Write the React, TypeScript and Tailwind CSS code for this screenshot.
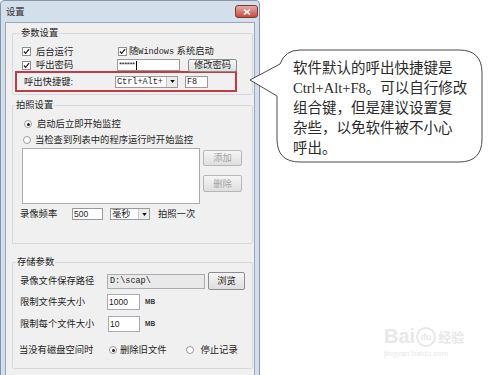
import React from "react";

function Check() {
  return (
    <span className="w-[9px] h-[9px] border border-[#8e8f8f] bg-white flex items-center justify-center shrink-0">
      <svg viewBox="0 0 8 8" className="w-[7px] h-[7px]">
        <path d="M1 4 L3 6.2 L7 1.2" stroke="#1a1a1a" strokeWidth="1.3" fill="none" />
      </svg>
    </span>
  );
}

function Radio({ on }: { on?: boolean }) {
  return (
    <span className="w-[8px] h-[8px] rounded-full border border-[#9a9a9a] bg-white flex items-center justify-center shrink-0">
      {on ? <span className="w-[3px] h-[3px] rounded-full bg-[#222]" /> : null}
    </span>
  );
}

function Btn({ children, w, h, disabled }: { children: React.ReactNode; w: string; h: string; disabled?: boolean }) {
  return (
    <div
      className={`${w} ${h} shrink-0 flex items-center justify-center border rounded-[2px] bg-linear-to-b from-[#f6f6f6] to-[#dedede] ${
        disabled ? "border-[#b5b8bb] text-[#a3a3a3]" : "border-[#8d8d8d] text-[#1e1e1e]"
      }`}
    >
      {children}
    </div>
  );
}

function Select({ w, children }: { w: string; children: React.ReactNode }) {
  return (
    <div className={`${w} h-[12px] shrink-0 flex border border-[#9b9b9b] bg-white`}>
      <div className="flex-1 flex items-center pl-[1px] overflow-hidden">{children}</div>
      <div className="w-[11px] h-full flex items-center justify-center bg-[#ececec] border-l border-[#c8c8c8]">
        <svg viewBox="0 0 6 4" className="w-[5px] h-[3px]">
          <path d="M0 0 H6 L3 4 Z" fill="#111" />
        </svg>
      </div>
    </div>
  );
}

export default function App() {
  const mono = "font-['Liberation_Mono','Noto_Sans_CJK_SC',monospace]";
  return (
    <div className="w-[500px] h-[375px] bg-white relative overflow-hidden flex font-['Liberation_Sans','Noto_Sans_CJK_SC',sans-serif] text-[9.3px] leading-[12px] text-[#1e1e1e]">
      {/* Window */}
      <div className="w-[260px] h-[400px] shrink-0 border border-[#8796aa] bg-[#d4dfec] rounded-t-[4px] flex flex-col">
        <div className="h-[21px] flex justify-between items-start">
          <span className="pl-[5px] pt-[5px] text-[#2a2a2a]">设置</span>
          <div className="mt-[4px] mr-[1px] w-[23px] h-[13px] rounded-[3px] border border-[#7b3a35] bg-linear-to-b from-[#e9aba1] to-[#c24a3e] flex items-center justify-center">
            <svg viewBox="0 0 8 6" className="w-[8px] h-[6px]">
              <path d="M1 0.5 L7 5.5 M7 0.5 L1 5.5" stroke="#fff" strokeWidth="1.6" />
            </svg>
          </div>
        </div>
        <div className="mx-[4px] flex-1 bg-[#f0f0f0] border border-[#98a7b9] flex flex-col">
          {/* Group 1 */}
          <fieldset className="mt-[4px] ml-[6px] w-[241px] border border-[#d3d9de] rounded-[2px] pb-[2px]">
            <legend className="ml-[7px] px-[1px] leading-[12px]">参数设置</legend>
            <div className="mt-[5px] h-[15px] flex items-center pl-[9px]">
              <div className="w-[96px] flex items-center">
                <Check />
                <span className="ml-[5px]">后台运行</span>
              </div>
              <Check />
              <span className="ml-[2px]">
                随<span className={`${mono} text-[8.5px]`}>Windows</span> 系统启动
              </span>
            </div>
            <div className="h-[12px] flex items-center pl-[9px]">
              <div className="w-[95px] flex items-center">
                <Check />
                <span className="ml-[5px]">呼出密码</span>
              </div>
              <div className="w-[63px] h-[12px] border border-[#9b9b9b] bg-white flex items-center pl-[1px] text-[8px] leading-[8px]">
                <span className="tracking-[-0.5px]">******</span>
                <span className="ml-[1px] w-[1px] h-[9px] bg-black" />
              </div>
              <div className="ml-[8px]">
                <Btn w="w-[49px]" h="h-[13px]">修改密码</Btn>
              </div>
            </div>
            <div className="ml-[2px] w-[222px] h-[21px] border-2 border-[#c23b43] flex items-center pl-[7px]">
              <span className="w-[91px]">呼出快捷键:</span>
              <Select w="w-[63px]">
                <span className={`${mono} text-[8.5px] leading-[10px]`}>Ctrl+Alt+</span>
              </Select>
              <div className={`ml-[7px] w-[23px] h-[12px] border border-[#9b9b9b] bg-white flex items-center pl-[1px] ${mono} text-[8.5px]`}>
                F8
              </div>
            </div>
          </fieldset>

          {/* Group 2 */}
          <fieldset className="mt-[4px] ml-[6px] w-[241px] border border-[#d3d9de] rounded-[2px] pb-[22px]">
            <legend className="ml-[2px] px-[1px] leading-[12px]">拍照设置</legend>
            <div className="mt-[5px] h-[16px] flex items-center pl-[11px]">
              <Radio on />
              <span className="ml-[5px]">启动后立即开始监控</span>
            </div>
            <div className="h-[16px] flex items-center pl-[10px]">
              <Radio />
              <span className="ml-[4px]">当检查到列表中的程序运行时开始监控</span>
            </div>
            <div className="flex">
              <div className="ml-[9px] w-[178px] h-[56px] border border-[#a9acb2] bg-white" />
              <div className="ml-[3px] pt-[2px] flex flex-col">
                <Btn w="w-[39px]" h="h-[16px]" disabled>添加</Btn>
                <div className="mt-[9px]">
                  <Btn w="w-[39px]" h="h-[17px]" disabled>删除</Btn>
                </div>
              </div>
            </div>
            <div className="mt-[3px] h-[14px] flex items-center pl-[7px]">
              <span className="w-[52px]">录像频率</span>
              <div className="w-[31px] h-[12px] border border-[#9b9b9b] bg-white flex items-center pl-[1px] text-[8.5px]">500</div>
              <div className="ml-[7px]">
                <Select w="w-[40px]">
                  <span>毫秒</span>
                </Select>
              </div>
              <span className="ml-[8px]">拍照一次</span>
            </div>
          </fieldset>

          {/* Group 3 */}
          <fieldset className="mt-[12px] ml-[6px] w-[241px] border border-[#d3d9de] rounded-[2px] pb-[10px]">
            <legend className="ml-[3px] px-[1px] leading-[12px]">存储参数</legend>
            <div className="mt-[4px] h-[18px] flex items-center pl-[7px]">
              <span className="w-[87px]">录像文件保存路径</span>
              <div className={`w-[98px] h-[15px] border border-[#a9acb2] bg-[#e9e9e9] flex items-center pl-[2px] ${mono} text-[8.5px]`}>
                D:\scap\
              </div>
              <div className="ml-[3px]">
                <Btn w="w-[37px]" h="h-[18px]">浏览</Btn>
              </div>
            </div>
            <div className="mt-[4px] h-[16px] flex items-center pl-[7px]">
              <span className="w-[87px]">限制文件夹大小</span>
              <div className="w-[33px] h-[16px] border border-[#a9acb2] bg-white flex items-center pl-[1px] text-[8.5px]">1000</div>
              <span className="ml-[5px] text-[6.5px] font-bold text-[#333]">MB</span>
            </div>
            <div className="mt-[6px] h-[16px] flex items-center pl-[7px]">
              <span className="w-[88px]">限制每个文件大小</span>
              <div className="w-[32px] h-[16px] border border-[#a9acb2] bg-white flex items-center pl-[1px] text-[8.5px]">10</div>
              <span className="ml-[5px] text-[6.5px] font-bold text-[#333]">MB</span>
            </div>
            <div className="mt-[10px] h-[16px] flex items-center pl-[6px]">
              <span className="w-[90px]">当没有磁盘空间时</span>
              <Radio on />
              <span className="ml-[3px]">删除旧文件</span>
              <span className="ml-[19px]">
                <Radio />
              </span>
              <span className="ml-[7px]">停止记录</span>
            </div>
          </fieldset>
        </div>
      </div>

      {/* Speech bubble annotation */}
      <svg className="absolute left-0 top-0 pointer-events-none" width="500" height="375" viewBox="0 0 500 375">
        <path
          d="M300 50 H459 Q482 50 482 73 V139 Q482 162 459 162 H300 Q277 162 277 139 V96 L250 80 L280 64 Q285 50 300 50 Z"
          fill="#fff"
          stroke="#4a4a4a"
          strokeWidth="1"
        />
      </svg>
      <div className="absolute left-[293px] top-[58px] w-[180px] font-['Liberation_Serif','Noto_Sans_CJK_SC',serif] text-[14.5px] leading-[20px] text-[#2a2a2a]">
        <div>软件默认的呼出快捷键是</div>
        <div>Ctrl+Alt+F8。可以自行修改</div>
        <div>组合键，但是建议设置复</div>
        <div>杂些，以免软件被不小心</div>
        <div>呼出。</div>
      </div>

      {/* Watermark */}
      <div className="absolute left-[384px] top-[325px] text-[#e8e8e8] flex flex-col items-start">
        <div className="flex items-end">
          <span className="text-[20px] leading-[22px] font-bold font-['Liberation_Sans',sans-serif]">Bai</span>
          <span className="ml-[1px] w-[20px] h-[20px] rounded-full border-2 border-[#e8e8e8] flex items-center justify-center text-[9px] font-bold">du</span>
          <span className="ml-[2px] text-[13px] leading-[18px] font-bold">经验</span>
        </div>
        <span className="text-[8px] leading-[10px] mt-[2px]">jingyan.baidu.com</span>
      </div>
    </div>
  );
}
